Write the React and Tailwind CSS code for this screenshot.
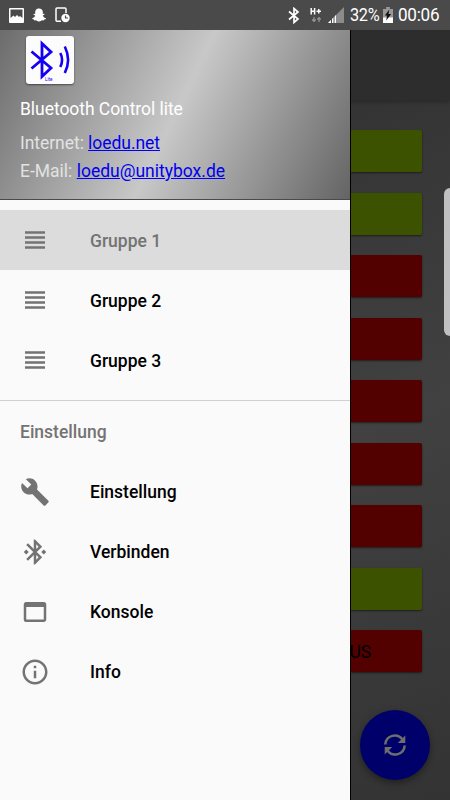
import { MdBluetoothConnected, MdBuild, MdInfoOutline, MdViewHeadline, MdWebAsset } from "react-icons/md";
import { FaSnapchatGhost } from "react-icons/fa";

const groups = ["Gruppe 1", "Gruppe 2", "Gruppe 3"];

const settings = [
  { label: "Einstellung", icon: MdBuild },
  { label: "Verbinden", icon: MdBluetoothConnected },
  { label: "Konsole", icon: MdWebAsset },
  { label: "Info", icon: MdInfoOutline },
];

const buttons = [
  { on: true }, { on: true }, { on: false }, { on: false }, { on: false },
  { on: false }, { on: false }, { on: true }, { on: false, label: "US" },
];

function StatusBar() {
  return (
    <header className="flex h-[30px] shrink-0 items-center bg-[#4a4a4a] pl-[9px] text-white">
      <svg width="15" height="15" viewBox="0 0 15 15">
        <path fill="currentColor" fillRule="evenodd" d="M1 0h13a1 1 0 0 1 1 1v13a1 1 0 0 1-1 1H1a1 1 0 0 1-1-1V1a1 1 0 0 1 1-1zM1.5 1.5v8.500L4.500 7.500l1.500 1.500 2-2 2 2 1-1 2.500 2v-8.500z" />
      </svg>
      <FaSnapchatGhost size={14} className="ml-2" />
      <svg className="ml-[9px]" width="16" height="16" viewBox="0 0 16 16" fill="none" stroke="currentColor">
        <path strokeWidth="1.5" d="M6 14.200H2a1 1 0 0 1-1-1V2a1 1 0 0 1 1-1h8a1 1 0 0 1 1 1v4" />
        <circle cx="10.500" cy="11" r="4.200" fill="currentColor" stroke="none" />
        <path stroke="#4a4a4a" strokeWidth="1.200" d="M10.500 8.500V11h2.500" />
      </svg>
      <div className="ml-auto flex items-center pr-[10px]">
        <svg width="12" height="17" viewBox="0 0 12 17" fill="none" stroke="currentColor" strokeWidth="1.700">
          <path d="M1 4.500l9 7.500-4 3.500v-14L10 5 1 12.500" />
        </svg>
        <svg className="ml-[10px]" width="13" height="16" viewBox="0 0 13 16" fill="none" stroke="currentColor">
          <path strokeWidth="1.500" d="M1.200 1v6.500M4.600 1v6.500M1.200 4.200h3.400M6.500 4.200h4.500M8.750 2v4.500" />
          <path stroke="#999" strokeWidth="1.200" d="M4 10v4M2.300 12.500L4 14.300l1.700-1.800M9 15v-4M7.300 12.500L9 10.700l1.700 1.800" />
        </svg>
        <svg className="ml-[5px]" width="16" height="16" viewBox="0 0 16 16">
          <path fill="#8b8b8b" d="M0 16L16 0v16z" />
          <path fill="currentColor" d="M0 16L8 8v8z" />
          <path stroke="#4a4a4a" d="M3.500 10v6M6 8v8" />
        </svg>
        <span className="ml-[6px] w-[30px] origin-left scale-x-[0.86] text-[19px] leading-[30px] tracking-[-0.4px]">32%</span>
        <svg className="ml-[3px]" width="10" height="16" viewBox="0 0 11 16" preserveAspectRatio="none">
          <path fill="#999" d="M3.500 0h4v2H11v9H0V2h3.500z" />
          <path fill="currentColor" d="M0 10.500h11V16H0z" />
          <path fill="#111" d="M7 2.500L2 8.500h2.500L3.500 13.500 9 7H6z" />
        </svg>
        <span className="ml-[5px] w-[42px] origin-left scale-x-[0.9] text-[19px] leading-[30px] tracking-[-0.3px]">00:06</span>
      </div>
    </header>
  );
}

function AppLogo() {
  return (
    <div className="ml-[26px] h-12 w-12 rounded-[3px] bg-[#fcfcfc] shadow-[0_1px_2px_rgba(0,0,0,0.5)]">
      <svg width="48" height="48" viewBox="0 0 48 48" fill="none" stroke="#1400f5">
        <path strokeWidth="2.800" d="M5.500 15.500L25 32 16 40.500V7.500L25 16 5.500 32.500" />
        <path strokeWidth="2.600" d="M34.300 17c2.300 4.500 2.300 9.500 0 14M38.800 10.500c4.200 8.500 4.200 18 0 26.500" />
        <text x="19" y="45" fontSize="4.500" fill="#1400f5" stroke="none">Lite</text>
      </svg>
    </div>
  );
}

function DrawerItem({ icon: Icon, label, active, labelClass }) {
  return (
    <li className={`flex h-[60px] items-center pl-5 ${active ? "bg-[#dcdcdc] text-[#737373]" : "text-black"}`}>
      <Icon size={30} className="text-[#737373]" />
      <span className={`ml-10 text-[17.5px] font-medium ${labelClass || ""}`}>{label}</span>
    </li>
  );
}

function Drawer() {
  return (
    <aside className="w-[351px] shrink-0 border-r border-black bg-[#fafafa]">
      <div className="h-[170px] border-b border-[#4a4a4a] bg-[linear-gradient(116deg,#6c6c6c,#c8c8c8_50%,#646464)] pt-1.5 text-[17.5px]">
        <AppLogo />
        <div className="pl-5">
          <h1 className="mt-[11px] leading-7 tracking-[-0.05px] text-white">Bluetooth Control lite</h1>
          <p className="mt-1.5 leading-7 tracking-[-0.05px] text-[#e2e2e2]">Internet: <a className="text-[#0000f0] underline" href="#">loedu.net</a></p>
          <p className="leading-7 text-[#e2e2e2]">E-Mail: <a className="text-[#0000f0] underline" href="#">loedu@unitybox.de</a></p>
        </div>
      </div>
      <ul className="py-[10px]">
        {groups.map((g, i) => <DrawerItem key={g} icon={MdViewHeadline} label={g} active={i === 0} labelClass="pt-0.5" />)}
      </ul>
      <div className="h-[62px] border-t border-[#d0d0d0] pl-5 text-[17.5px] font-medium leading-[62px] text-[#737373]">Einstellung</div>
      <ul>
        {settings.map((s) => <DrawerItem key={s.label} icon={s.icon} label={s.label} />)}
      </ul>
    </aside>
  );
}

function ControlPanel() {
  return (
    <main className="relative flex flex-1 flex-col overflow-hidden bg-[linear-gradient(160deg,#313131,#414141_50%,#333333)]">
      <div className="h-[70px] bg-[#2d2d2d] shadow-[0_2px_4px_rgba(0,0,0,0.25)]" />
      <div className="mt-[30px] flex flex-col gap-[20.5px] pr-[28px]">
        {buttons.map((b, i) => (
          <div key={i} className={`h-[42px] rounded-r-[2px] text-[17.5px] leading-[44px] -indent-[1.5px] text-black shadow-[0_1px_2px_rgba(0,0,0,0.5)] ${b.on ? "bg-[#3d5200]" : "bg-[#520000]"}`}>
            {b.label}
          </div>
        ))}
      </div>
      <div className="mt-[38px] ml-[9px] flex h-[70px] w-[70px] items-center justify-center rounded-full bg-[#00006a] shadow-[0_3px_7px_rgba(0,0,0,0.4)]">
        <svg width="24" height="24" viewBox="0 0 24 24" fill="none" stroke="#6e6e6e" strokeWidth="2.500">
          <path d="M2.300 11.500A9.500 9.500 0 0 1 19.500 6.500" />
          <path d="M21.700 12.500A9.500 9.500 0 0 1 4.500 17.500" />
          <path fill="#6e6e6e" stroke="none" d="M22.300 2.500v7.500h-7.500zM1.700 21.500v-7.500h7.500z" />
        </svg>
      </div>
      <div className="absolute top-[158px] right-0 h-[148px] w-[6px] rounded-l-[6px] bg-[#c0bfc1]" />
    </main>
  );
}

export default function App() {
  return (
    <div className="flex h-[800px] w-[450px] flex-col overflow-hidden font-['Roboto',sans-serif]">
      <StatusBar />
      <div className="flex flex-1">
        <Drawer />
        <ControlPanel />
      </div>
    </div>
  );
}
